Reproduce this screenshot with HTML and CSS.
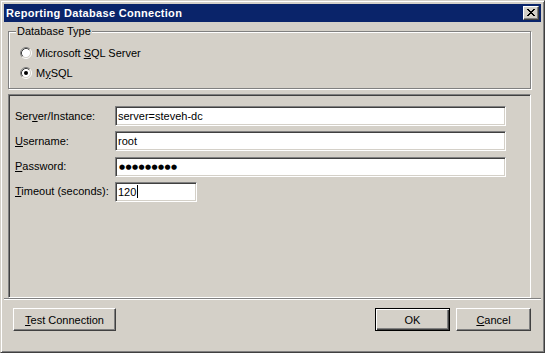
FILE: index.html
```html
<!DOCTYPE html>
<html>
<head>
<meta charset="utf-8">
<link rel="stylesheet" href="styles.css">
</head>
<body>
<div class="window">
  <div class="titlebar">
    <span class="title">Reporting Database Connection</span>
    <div class="close">
      <svg width="8" height="7" viewBox="0 0 8 7" shape-rendering="crispEdges">
        <path d="M0 0h2v1h1v1h2v-1h1v-1h2v1h-1v1h-1v1h-1v1h1v1h1v1h1v1h-2v-1h-1v-1h-2v1h-1v1h-2v-1h1v-1h1v-1h1v-1h-1v-1h-1v-1h-1z" fill="#000"/>
      </svg>
    </div>
  </div>
  <div class="client">
    <fieldset class="group">
      <legend class="group-label">Database Type</legend>
      <div class="radio-row">
        <svg class="radio" width="12" height="12" viewBox="0 0 12 12">
          <circle cx="6" cy="6" r="4.5" fill="#fff"/>
          <path d="M2.11 9.89 A5.5 5.5 0 0 1 9.89 2.11" stroke="#808080" fill="none"/>
          <path d="M9.89 2.11 A5.5 5.5 0 0 1 2.11 9.89" stroke="#fff" fill="none"/>
          <path d="M2.82 9.18 A4.5 4.5 0 0 1 9.18 2.82" stroke="#404040" fill="none"/>
          <path d="M9.18 2.82 A4.5 4.5 0 0 1 2.82 9.18" stroke="#d4d0c8" fill="none"/>
        </svg>
        <span>Microsoft <u>S</u>QL Server</span>
      </div>
      <div class="radio-row">
        <svg class="radio" width="12" height="12" viewBox="0 0 12 12">
          <circle cx="6" cy="6" r="4.5" fill="#fff"/>
          <path d="M2.11 9.89 A5.5 5.5 0 0 1 9.89 2.11" stroke="#808080" fill="none"/>
          <path d="M9.89 2.11 A5.5 5.5 0 0 1 2.11 9.89" stroke="#fff" fill="none"/>
          <path d="M2.82 9.18 A4.5 4.5 0 0 1 9.18 2.82" stroke="#404040" fill="none"/>
          <path d="M9.18 2.82 A4.5 4.5 0 0 1 2.82 9.18" stroke="#d4d0c8" fill="none"/>
          <circle cx="6" cy="6" r="2" fill="#000"/>
        </svg>
        <span>M<u>y</u>SQL</span>
      </div>
    </fieldset>

    <div class="panel">
      <div class="form">
        <label class="label">Ser<u>v</u>er/Instance:</label>
        <div class="field wide">server=steveh-dc</div>
        <label class="label"><u>U</u>sername:</label>
        <div class="field wide">root</div>
        <label class="label"><u>P</u>assword:</label>
        <div class="field wide dots">●●●●●●●●●</div>
        <label class="label"><u>T</u>imeout (seconds):</label>
        <div class="field short">120<span class="caret"></span></div>
      </div>
    </div>

    <div class="separator"></div>

    <div class="buttons">
      <button class="btn test"><u>T</u>est Connection</button>
      <div class="spacer"></div>
      <button class="btn default">OK</button>
      <button class="btn"><u>C</u>ancel</button>
    </div>
  </div>
</div>
</body>
</html>
```

FILE: styles.css
```css
html, body {
  margin: 0;
  padding: 0;
  background: #d4d0c8;
}

body {
  font: 11px "Liberation Sans", Arial, sans-serif;
  color: #000;
}

.window {
  width: 545px;
  height: 353px;
  box-sizing: border-box;
  border: 1px solid;
  border-color: #d4d0c8 #404040 #404040 #d4d0c8;
  box-shadow: inset 1px 1px #fff, inset -1px -1px #808080;
  padding: 3px;
  display: flex;
  flex-direction: column;
  background: #d4d0c8;
}

.titlebar {
  height: 18px;
  background: #0a246a;
  display: flex;
  align-items: center;
  justify-content: space-between;
  flex: none;
}

.title {
  color: #fff;
  font-weight: bold;
  font-size: 11px;
  padding-left: 2px;
  letter-spacing: 0.3px;
}

.close {
  width: 16px;
  height: 14px;
  box-sizing: border-box;
  margin-right: 2px;
  background: #d4d0c8;
  border: 1px solid;
  border-color: #fff #404040 #404040 #fff;
  box-shadow: inset -1px -1px #808080;
  display: flex;
  align-items: center;
  justify-content: center;
  padding: 0 1px 1px 0;
}

.client {
  flex: 1;
  display: flex;
  flex-direction: column;
  padding: 0 10px 0 4px;
}

.group {
  margin: 3px 0 0 0;
  padding: 5px 0 0 11px;
  height: 64px;
  box-sizing: border-box;
  border: 1px solid #808080;
  box-shadow: inset 1px 1px #fff, 1px 1px #fff;
  min-width: 0;
}

.group-label {
  padding: 0 1px;
  margin-left: -4px;
  line-height: 13px;
  background: #d4d0c8;
}

.radio-row {
  height: 20px;
  display: flex;
  align-items: center;
  gap: 4px;
}

.radio {
  flex: none;
}

.panel {
  margin-top: 5px;
  height: 204px;
  box-sizing: border-box;
  border: 1px solid;
  border-color: #808080 #fff #fff #808080;
  box-shadow: inset 1px 1px #404040, inset -1px -1px #d4d0c8;
  padding: 11px 0 0 6px;
}

.form {
  display: grid;
  grid-template-columns: 100px auto;
  grid-auto-rows: 20px;
  row-gap: 5.33px;
  align-items: center;
  justify-items: start;
}

.label {
  line-height: 13px;
}

.field {
  height: 20px;
  box-sizing: border-box;
  background: #fff;
  border: 1px solid;
  border-color: #808080 #fff #fff #808080;
  box-shadow: inset 1px 1px #404040, inset -1px -1px #d4d0c8;
  padding: 0 2px;
  display: flex;
  align-items: center;
  white-space: nowrap;
}

.wide {
  width: 391px;
}

.short {
  width: 82px;
}

.dots {
  font-family: "DejaVu Sans", sans-serif;
  font-size: 7px;
  letter-spacing: 0.4px;
  padding-left: 3px;
}

.caret {
  width: 1px;
  height: 13px;
  background: #000;
  margin-left: 1px;
}

.separator {
  margin: 0 -10px 0 -4px;
  height: 0;
  border-top: 1px solid #808080;
  border-bottom: 1px solid #fff;
}

.buttons {
  margin-top: 8px;
  display: flex;
  align-items: center;
  gap: 6px;
}

.spacer {
  flex: 1;
}

.btn {
  height: 23px;
  width: 75px;
  box-sizing: border-box;
  margin: 0;
  padding: 0;
  font: 11px "Liberation Sans", Arial, sans-serif;
  color: #000;
  background: #d4d0c8;
  border: 1px solid;
  border-color: #fff #404040 #404040 #fff;
  box-shadow: inset -1px -1px #808080;
  border-radius: 0;
}

.btn.test {
  width: 103px;
  margin-left: 5px;
}

.btn.default {
  border: 1px solid #000;
  box-shadow: inset 1px 1px #fff, inset -1px -1px #404040, inset -2px -2px #808080;
}
```
